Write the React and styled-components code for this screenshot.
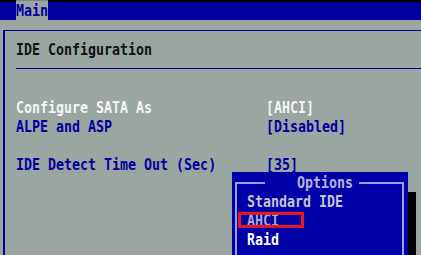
import React from 'react';
import styled, { createGlobalStyle, css } from 'styled-components';

const GREY = '#9ba5a1';
const BLUE = '#0000a0';
const POPUP_BLUE = '#0000a8';
const FRAME = '#9c9ce0';

const GlobalStyle = createGlobalStyle`
  html, body {
    margin: 0;
    padding: 0;
    overflow: hidden;
  }
  body {
    background: ${GREY};
    font-family: "DejaVu Sans Mono", "Liberation Mono", monospace;
    font-weight: bold;
    font-size: 13.3px;
  }
`;

const Screen = styled.div`
  position: relative;
  height: 255px;
  overflow: hidden;
  display: flex;
  flex-direction: column;
`;

const tall = css`
  display: block;
  white-space: pre;
  transform: scaleY(1.2);
`;

const MenuBar = styled.div`
  display: flex;
  height: 18px;
  background: ${BLUE};
  border-top: 2px solid #000;
  padding-left: 16px;
`;

const Tab = styled.div`
  ${tall};
  line-height: 18px;
  color: ${BLUE};
  background: ${({ active }) => (active ? GREY : 'transparent')};
`;

const Panel = styled.div`
  flex: 1;
  margin: 10px 0 0 3px;
  border-left: 2px solid ${BLUE};
  border-top: 1px solid ${BLUE};
  padding: 9px 0 0 11px;
`;

const Title = styled.div`
  ${tall};
  line-height: 19px;
  color: #111;
`;

const Rule = styled.div`
  height: 1px;
  margin-top: 9px;
  background: ${BLUE};
`;

const Settings = styled.div`
  display: grid;
  grid-template-columns: 250px auto;
  grid-auto-rows: 19px;
  margin-top: 29px;
`;

const Cell = styled.span`
  ${tall};
  line-height: 19px;
  color: ${({ selected }) => (selected ? '#f4f4f4' : BLUE)};
`;

const Popup = styled.div`
  position: absolute;
  left: 232px;
  top: 172px;
  width: 176px;
  height: 120px;
  background: ${POPUP_BLUE};
  box-shadow: 8px 20px 0 #000;
  padding-top: 1px;
  box-sizing: border-box;
`;

const Frame = styled.fieldset`
  margin: 0 4px 0 3px;
  padding: 0 0 0 10px;
  height: 110px;
  border: 2px solid ${FRAME};
  border-bottom: none;
  box-sizing: border-box;
`;

const Legend = styled.legend`
  ${tall};
  margin-left: 18px;
  padding: 0 6px 0 32px;
  line-height: 19px;
  color: #b4b4dc;
`;

const Option = styled.div`
  ${tall};
  position: relative;
  line-height: 19px;
  color: ${({ tone }) => tone};
`;

const Highlight = styled.div`
  position: absolute;
  left: -9px;
  top: 1px;
  width: 66px;
  height: 16px;
  border: 3px solid #ec1620;
  box-sizing: border-box;
  transform: scaleY(0.834);
`;

const settings = [
  { label: 'Configure SATA As', value: '[AHCI]', selected: true },
  { label: 'ALPE and ASP', value: '[Disabled]' },
  null,
  { label: 'IDE Detect Time Out (Sec)', value: '[35]' },
];

const options = [
  { name: 'Standard IDE', tone: '#c6c6d0' },
  { name: 'AHCI', tone: '#a8a8cc', marked: true },
  { name: 'Raid', tone: '#ffffff' },
];

const App = () => (
  <>
    <GlobalStyle />
    <Screen>
      <MenuBar>
        <Tab active>Main</Tab>
      </MenuBar>
      <Panel>
        <Title>IDE Configuration</Title>
        <Rule />
        <Settings>
          {settings.map((row, i) =>
            row ? (
              <React.Fragment key={row.label}>
                <Cell selected={row.selected}>{row.label}</Cell>
                <Cell selected={row.selected}>{row.value}</Cell>
              </React.Fragment>
            ) : (
              <React.Fragment key={`gap-${i}`}>
                <span />
                <span />
              </React.Fragment>
            ),
          )}
        </Settings>
      </Panel>
      <Popup>
        <Frame>
          <Legend>Options</Legend>
          {options.map((opt) => (
            <Option key={opt.name} tone={opt.tone}>
              {opt.name}
              {opt.marked && <Highlight />}
            </Option>
          ))}
        </Frame>
      </Popup>
    </Screen>
  </>
);

export default App;
